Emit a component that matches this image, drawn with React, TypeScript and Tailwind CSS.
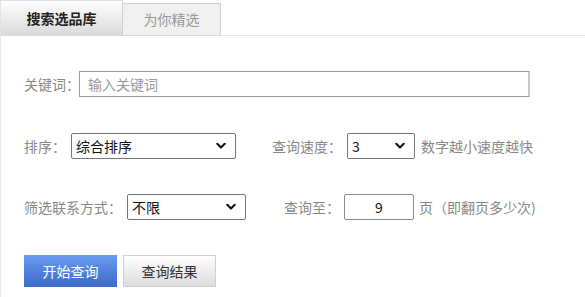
import React from "react";

const font = { fontFamily: '"Microsoft YaHei", "Noto Sans CJK SC", "Liberation Sans", sans-serif' };

function Chevron() {
  return (
    <svg width="10" height="7" viewBox="0 0 10 7" className="absolute right-[9px] top-1/2 -translate-y-1/2">
      <path d="M1.3 1.3 L5 5 L8.7 1.3" fill="none" stroke="#111" strokeWidth="2.1" strokeLinecap="round" strokeLinejoin="round" />
    </svg>
  );
}

function Select({ value, width }: { value: string; width: string }) {
  return (
    <div className={`relative h-[26px] ${width} border border-[#767676] rounded-[2px] bg-white flex items-center pl-[4px] text-[14px] text-[#111]`}>
      {value}
      <Chevron />
    </div>
  );
}

export default function App() {
  return (
    <div className="w-[585px] h-[297px] bg-white overflow-hidden text-[14px]" style={font}>
      <div className="flex items-end h-[36px]">
        <div className="w-[123px] h-[36px] border-l border-t border-r border-[#e2e2e2] border-r-[#cfcfcf] bg-gradient-to-b from-white to-[#d9d9d9] flex items-center justify-center text-[14px] font-bold text-[#222]">
          搜索选品库
        </div>
        <div className="w-[98px] h-[33px] border border-l-0 border-[#d2d2d2] border-b-[#dcdcdc] bg-[#f0f0f0] flex items-center justify-center text-[14px] text-[#999]">
          为你精选
        </div>
        <div className="flex-1 h-[1px] bg-[#e6e6e6]" />
      </div>
      <div className="border-l border-[#ebebeb] h-[261px] pl-[23px] pt-[35px] flex flex-col">
        <div className="flex items-center h-[26px]">
          <span className="text-[#888] w-[55px] whitespace-nowrap">关键词：</span>
          <div className="w-[451px] h-[26px] border border-[#9a9a9a] border-r-[#c8c8c8] border-r-2 flex items-center pl-[8px] text-[#999]">
            输入关键词
          </div>
        </div>
        <div className="flex items-center h-[26px] mt-[36px]">
          <span className="text-[#888] w-[47px] whitespace-nowrap">排序：</span>
          <Select value="综合排序" width="w-[165px]" />
          <span className="text-[#888] ml-[36px] w-[75px] whitespace-nowrap">查询速度：</span>
          <Select value="3" width="w-[68px]" />
          <span className="text-[#888] ml-[6px] whitespace-nowrap">数字越小速度越快</span>
        </div>
        <div className="flex items-center h-[26px] mt-[35px]">
          <span className="text-[#888] w-[103px] whitespace-nowrap">筛选联系方式：</span>
          <Select value="不限" width="w-[119px]" />
          <span className="text-[#888] ml-[38px] w-[60px] whitespace-nowrap">查询至：</span>
          <div className="w-[70px] h-[26px] border border-[#8a8a8a] rounded-[2px] flex items-center justify-center text-[#111]">9</div>
          <span className="text-[#888] ml-[5px] whitespace-nowrap">页（即翻页多少次)</span>
        </div>
        <div className="flex items-center mt-[35px] gap-[6px]">
          <div className="w-[93px] h-[32px] bg-gradient-to-b from-[#6a9af0] to-[#3d6acb] flex items-center justify-center text-white">
            开始查询
          </div>
          <div className="w-[93px] h-[32px] border border-[#d0d0d0] bg-gradient-to-b from-white to-[#dcdcdc] flex items-center justify-center text-[#333]">
            查询结果
          </div>
        </div>
      </div>
    </div>
  );
}
